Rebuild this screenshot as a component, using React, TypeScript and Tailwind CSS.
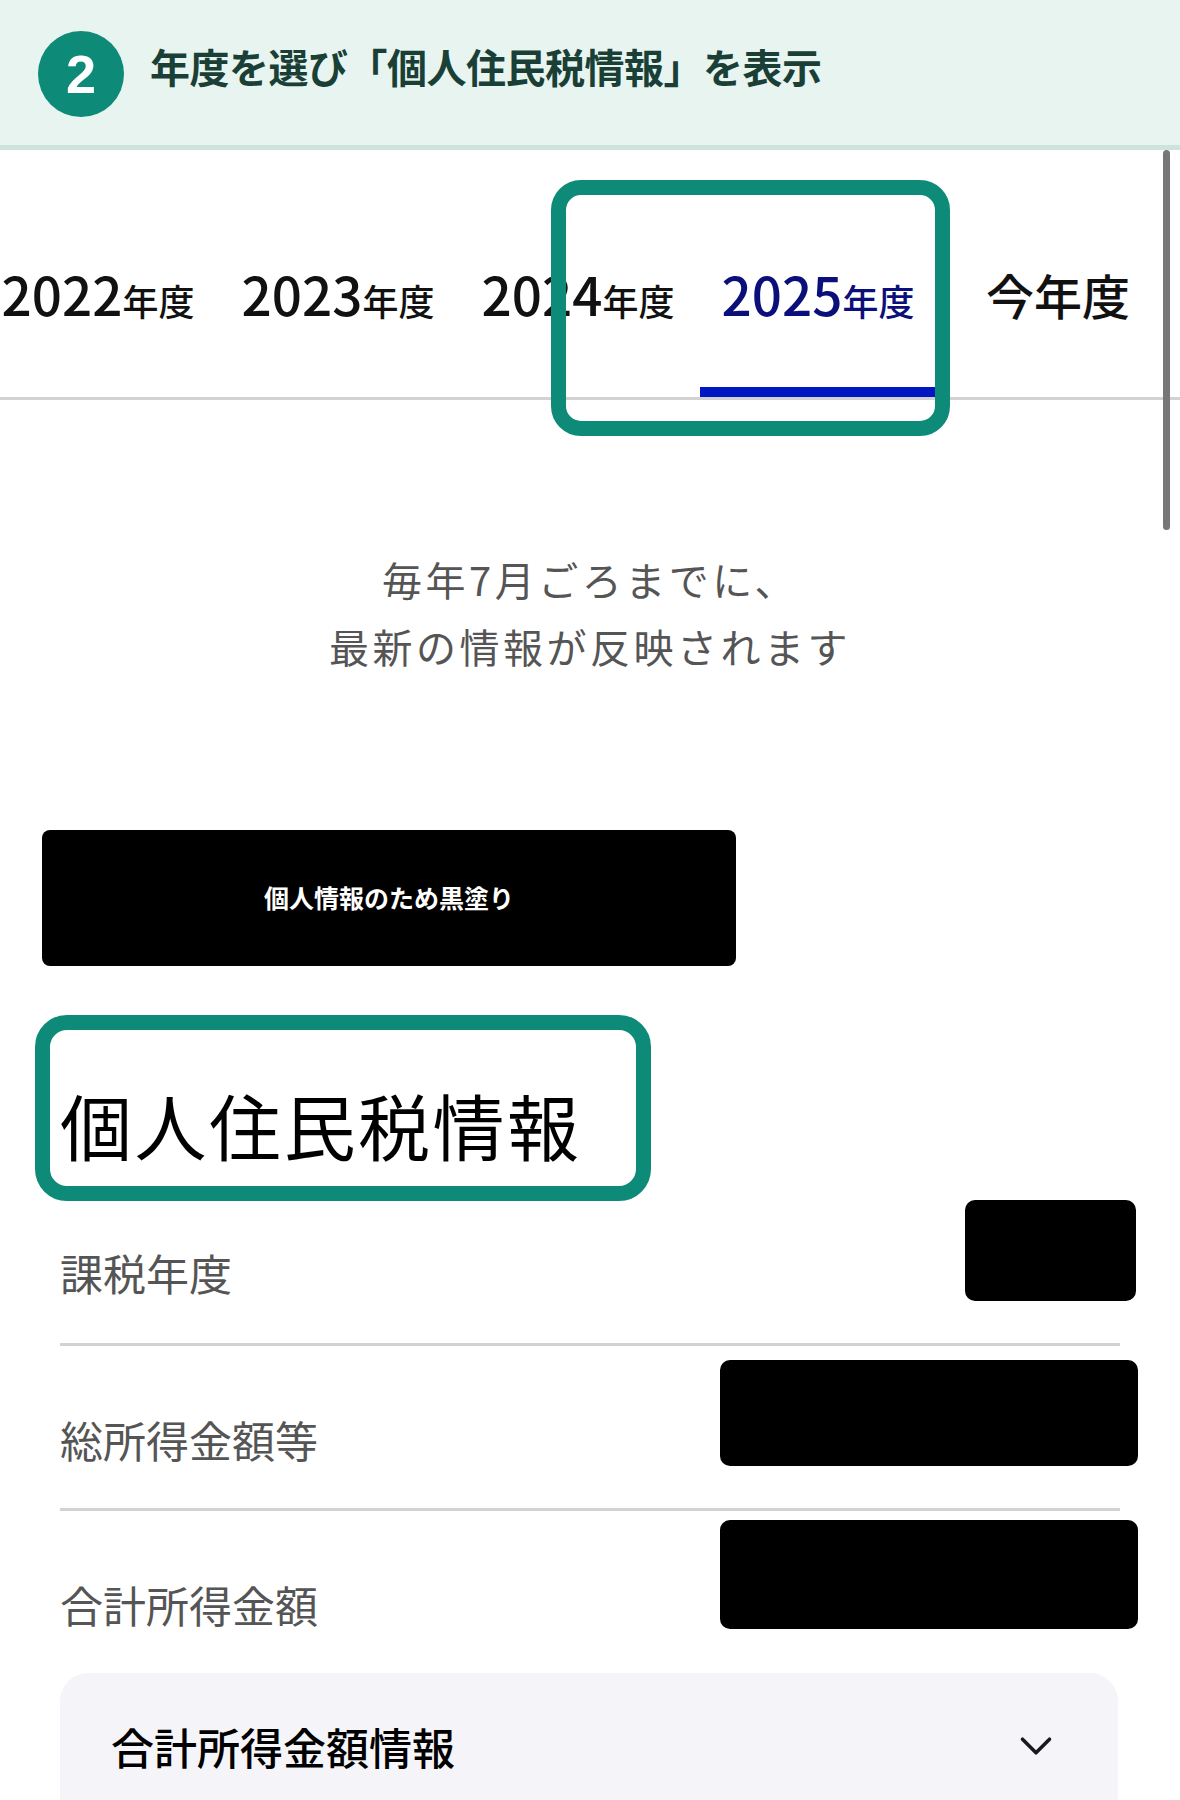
import React from "react";
import { ChevronDown } from "lucide-react";

const jp = { fontFamily: '"Noto Sans CJK JP", "Noto Sans", sans-serif' };

const years = [
  { num: "2022", active: false },
  { num: "2023", active: false },
  { num: "2024", active: false },
  { num: "2025", active: true },
];

const rows = [
  { label: "課税年度", rowCls: "h-[145px] border-b-[3px] pt-[40px]", maskCls: "top-[-1px] right-[-16px] w-[171px] h-[101px]" },
  { label: "総所得金額等", rowCls: "h-[165px] border-b-[3px] pt-[62px]", maskCls: "top-[14px] right-[-18px] w-[418px] h-[106px]" },
  { label: "合計所得金額", rowCls: "h-[162px] pt-[62px]", maskCls: "top-[9px] right-[-18px] w-[418px] h-[109px]" },
];

const App = () => {
  return (
    <div className="relative h-[1800px] w-[1180px] overflow-hidden bg-white" style={jp}>
      {/* step header */}
      <div className="flex h-[150px] items-center border-b-[5px] border-[#cde3dd] bg-[#e7f4f0] pl-[38px] pt-[2px]">
        <div className="flex h-[86px] w-[86px] items-center justify-center rounded-full bg-[#0e8a78]">
          <span className="text-[54px] font-bold leading-none text-white" style={{ fontFamily: '"Liberation Sans", Arial, sans-serif' }}>
            2
          </span>
        </div>
        <h2 className="mb-[16px] ml-[26px] text-[40px] font-bold leading-none tracking-[-0.5px] text-[#1a3f36]">
          年度を選び「個人住民税情報」を表示
        </h2>
      </div>

      {/* year tabs */}
      <div className="h-[250px] overflow-hidden border-b-[3px] border-[#d2d2d2]">
        <div className="ml-[-22px] flex h-full w-max">
          {years.map((y) => (
            <div key={y.num} className="relative flex h-full w-[240px] items-center justify-center pt-[40px]">
              <span className={`font-medium ${y.active ? "text-[#0b0f7a]" : "text-[#111]"}`}>
                <span className="text-[53px] leading-none">{y.num}</span>
                <span className="text-[36px] leading-none">年度</span>
              </span>
              {y.active && <div className="absolute bottom-0 left-[2px] right-0 h-[10px] bg-[#0017c1]" />}
            </div>
          ))}
          <div className="flex h-full w-[240px] items-center justify-center pt-[40px]">
            <span className="text-[48px] font-medium leading-none text-[#111]">今年度</span>
          </div>
        </div>
      </div>

      {/* notice */}
      <p className="pt-[146px] text-center text-[40px] leading-[67px] tracking-[3.5px] text-[#555]">
        毎年7月ごろまでに、
        <br />
        最新の情報が反映されます
      </p>

      {/* masked personal info */}
      <div className="ml-[42px] mt-[150px] flex h-[136px] w-[694px] items-center justify-center rounded-[8px] bg-black">
        <span className="text-[25px] font-bold tracking-[0px] text-white">個人情報のため黒塗り</span>
      </div>

      <h1 className="mt-[115px] pl-[60px] text-[72px] leading-[86px] tracking-[2.5px] text-black">個人住民税情報</h1>

      <div className="mx-[60px] mt-[34px]">
        {rows.map((r) => (
          <div key={r.label} className={`relative border-[#d2d2d2] ${r.rowCls}`}>
            <span className="text-[43px] leading-[63px] text-[#555]">{r.label}</span>
            <div className={`absolute rounded-[10px] bg-black ${r.maskCls}`} />
          </div>
        ))}
      </div>

      {/* accordion */}
      <div className="mx-[60px] mr-[62px] flex h-[160px] items-start justify-between rounded-[28px] bg-[#f5f5f9] pl-[51px] pr-[55px] pt-[42px]">
        <span className="text-[43px] font-medium leading-[63px] text-black">合計所得金額情報</span>
        <ChevronDown className="mt-[4px] h-[54px] w-[54px] text-[#1a1a1a]" strokeWidth={1.6} />
      </div>

      {/* highlight frames */}
      <div className="absolute left-[551px] top-[180px] h-[256px] w-[399px] rounded-[30px] border-[15px] border-[#0e8a78]" />
      <div className="absolute left-[35px] top-[1015px] h-[186px] w-[616px] rounded-[32px] border-[15px] border-[#0e8a78]" />

      {/* scrollbar thumb */}
      <div className="absolute left-[1163px] top-[150px] h-[380px] w-[7px] rounded-full bg-[#777]" />
    </div>
  );
};

export default App;
